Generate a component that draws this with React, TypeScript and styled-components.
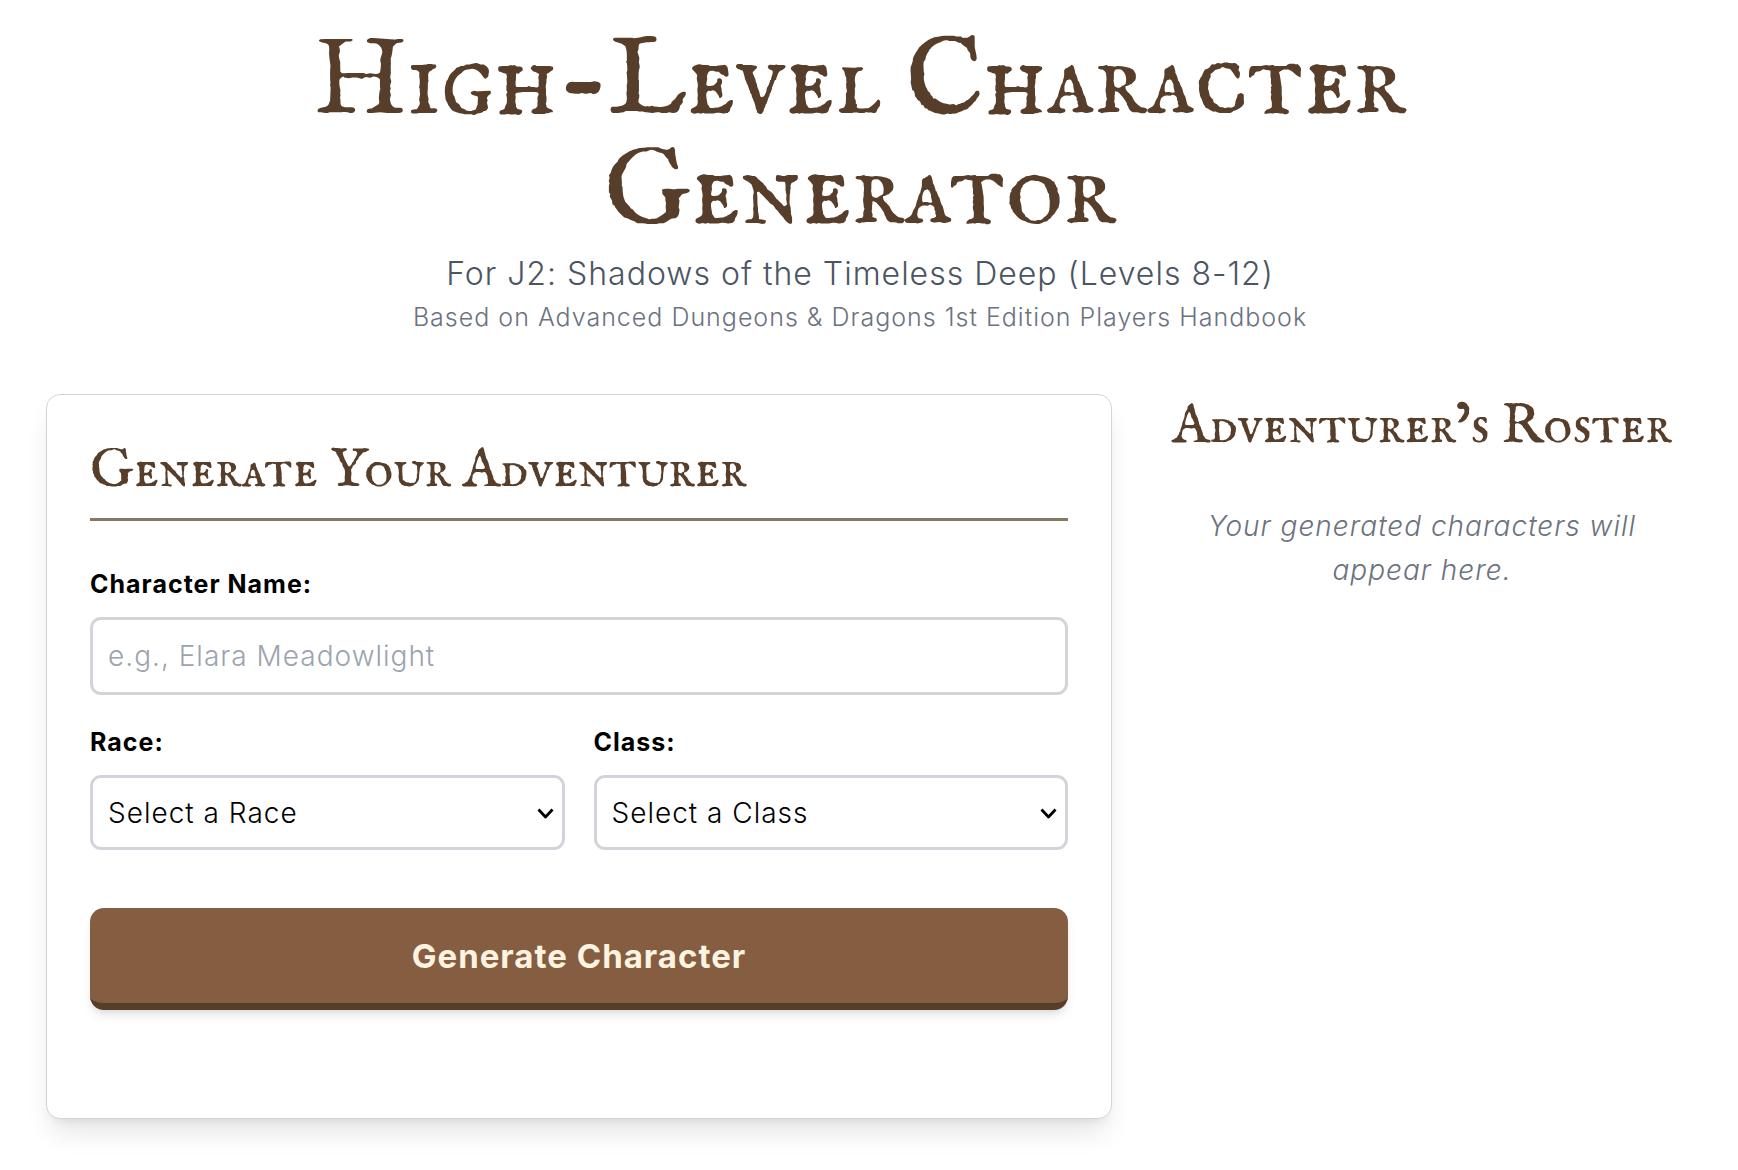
import React, { useId, useState } from "react";
import styled, { createGlobalStyle } from "styled-components";

const color = {
  ink: "#000000",
  umber: "#573e2a",
  leather: "#855d41",
  parchment: "#fef3e0",
  rule: "#877863",
  slate: "#4b5563",
  muted: "#6b7280",
  placeholder: "#9ca3af",
  line: "#d1d5db",
};

const sans = `Inter, "Liberation Sans", sans-serif`;
const display = `"IM Fell English SC", "Liberation Serif", serif`;

const GlobalStyle = createGlobalStyle`
  *, *::before, *::after { box-sizing: border-box; }
  body {
    margin: 0;
    background: #ffffff;
    color: ${color.ink};
    font-family: ${sans};
    font-size: 28px;
    font-weight: 300;
    line-height: 44px;
    letter-spacing: 1px;
  }
  h1, h2, p { margin: 0; }
`;

const Page = styled.div`
  padding: 29px 64px 52px 46px;
`;

const Header = styled.header`
  padding: 0 58px;
  margin-bottom: 58px;
  text-align: center;
`;

const Title = styled.h1`
  color: ${color.umber};
  font-family: ${display};
  font-size: 109px;
  font-weight: 400;
  line-height: 110px;
  letter-spacing: normal;
`;

const Subtitle = styled.p`
  color: ${color.slate};
  font-size: 32px;
  line-height: 50px;
`;

const Source = styled.p`
  color: ${color.muted};
  font-size: 25px;
  line-height: 37px;
`;

const Columns = styled.main`
  display: grid;
  grid-template-columns: repeat(3, minmax(0, 1fr));
  gap: 58px;
  align-items: start;
`;

const Card = styled.section`
  grid-column: span 2;
  padding: 43px 43px 108px;
  background: #ffffff;
  border: 1px solid ${color.line};
  border-radius: 14px;
  box-shadow: 0 18px 27px -5px rgba(0, 0, 0, 0.1), 0 7px 11px -7px rgba(0, 0, 0, 0.1);
`;

const Heading = styled.h2`
  color: ${color.umber};
  font-family: ${display};
  font-size: 55px;
  font-weight: 400;
  line-height: 66px;
  letter-spacing: normal;
  white-space: nowrap;
`;

const RuledHeading = styled(Heading)`
  margin-bottom: 45px;
  padding-bottom: 14px;
  border-bottom: 3px solid ${color.rule};
`;

const Form = styled.form`
  display: flex;
  flex-direction: column;
  gap: 29px;
`;

const FieldRow = styled.div`
  display: grid;
  grid-template-columns: 1fr 1fr;
  gap: 29px;
`;

const Field = styled.div`
  display: flex;
  flex-direction: column;
  gap: 14px;
`;

const Label = styled.label`
  font-size: 25px;
  font-weight: 700;
  line-height: 37px;
`;

const TextInput = styled.input`
  width: 100%;
  height: 78px;
  padding: 0 15px;
  background: #ffffff;
  border: 3px solid ${color.line};
  border-radius: 11px;
  color: ${color.ink};
  font: inherit;
  letter-spacing: inherit;

  &::placeholder { color: ${color.placeholder}; opacity: 1; }
`;

const SelectBox = styled.div`
  position: relative;
`;

const Select = styled.select`
  display: block;
  width: 100%;
  height: 75px;
  padding: 0 40px 0 15px;
  appearance: none;
  background: #ffffff;
  border: 3px solid ${color.line};
  border-radius: 11px;
  color: ${color.ink};
  font: inherit;
  letter-spacing: inherit;
`;

const Chevron = styled.svg`
  position: absolute;
  top: 33px;
  right: 11px;
  width: 17px;
  height: 11px;
  pointer-events: none;
`;

const SubmitButton = styled.button`
  width: 100%;
  height: 102px;
  margin-top: 29px;
  padding: 0;
  background: ${color.leather};
  border: 0;
  border-bottom: 7px solid ${color.umber};
  border-radius: 14px;
  box-shadow: 0 7px 11px -2px rgba(0, 0, 0, 0.1), 0 4px 7px -4px rgba(0, 0, 0, 0.1);
  color: ${color.parchment};
  font: inherit;
  font-size: 33px;
  font-weight: 700;
  letter-spacing: inherit;
  cursor: pointer;
`;

const Roster = styled.aside`
  display: flex;
  flex-direction: column;
  align-items: center;
  gap: 44px;
  text-align: center;
`;

const EmptyNote = styled.p`
  color: ${color.muted};
  font-style: italic;
`;

const races = ["Human", "Elf", "Half-Elf", "Dwarf", "Halfling", "Gnome", "Half-Orc"];
const classes = ["Fighter", "Paladin", "Ranger", "Cleric", "Druid", "Magic-User", "Illusionist", "Thief", "Assassin", "Monk"];

function SelectField({ label, prompt, options }: { label: string; prompt: string; options: string[] }) {
  const id = useId();
  const [value, setValue] = useState("");
  return (
    <Field>
      <Label htmlFor={id}>{label}</Label>
      <SelectBox>
        <Select id={id} value={value} onChange={(e) => setValue(e.target.value)}>
          <option value="">{prompt}</option>
          {options.map((option) => (
            <option key={option} value={option}>{option}</option>
          ))}
        </Select>
        <Chevron viewBox="0 0 17 11" fill="none" aria-hidden="true">
          <path d="M1.500 1.500l7 7.500 7-7.500" stroke="#000" strokeWidth="2.800" strokeLinejoin="round" />
        </Chevron>
      </SelectBox>
    </Field>
  );
}

export default function App() {
  const nameId = useId();
  const [name, setName] = useState("");
  return (
    <>
      <GlobalStyle />
      <Page>
        <Header>
          <Title>High-Level Character Generator</Title>
          <Subtitle>For J2: Shadows of the Timeless Deep (Levels 8-12)</Subtitle>
          <Source>Based on Advanced Dungeons &amp; Dragons 1st Edition Players Handbook</Source>
        </Header>
        <Columns>
          <Card>
            <RuledHeading>Generate Your Adventurer</RuledHeading>
            <Form onSubmit={(e) => e.preventDefault()}>
              <Field>
                <Label htmlFor={nameId}>Character Name:</Label>
                <TextInput
                  id={nameId}
                  type="text"
                  placeholder="e.g., Elara Meadowlight"
                  value={name}
                  onChange={(e) => setName(e.target.value)}
                />
              </Field>
              <FieldRow>
                <SelectField label="Race:" prompt="Select a Race" options={races} />
                <SelectField label="Class:" prompt="Select a Class" options={classes} />
              </FieldRow>
              <SubmitButton type="submit">Generate Character</SubmitButton>
            </Form>
          </Card>
          <Roster>
            <Heading>Adventurer’s Roster</Heading>
            <EmptyNote>Your generated characters will appear here.</EmptyNote>
          </Roster>
        </Columns>
      </Page>
    </>
  );
}
